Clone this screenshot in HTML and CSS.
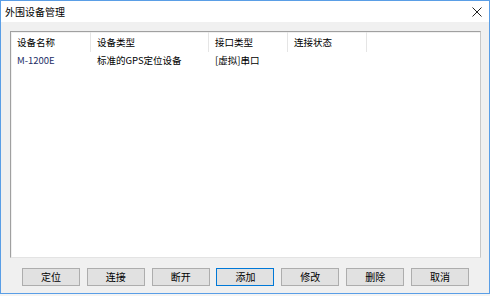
FILE: index.html
```html
<!DOCTYPE html>
<html lang="zh-CN">
<head>
  <meta charset="UTF-8">
  <title>外围设备管理</title>
  <link rel="stylesheet" href="styles.css">
</head>
<body>
  <div class="window">
    <div class="titlebar">
      <span class="title">外围设备管理</span>
      <span class="close">
        <svg width="10" height="10" viewBox="0 0 10 10">
          <path d="M0.5 0.5 L9.5 9.5 M9.5 0.5 L0.5 9.5" stroke="#222" stroke-width="1" fill="none"/>
        </svg>
      </span>
    </div>
    <div class="content">
      <div class="listbox">
        <div class="list-header">
          <div class="col c1">设备名称</div>
          <div class="col c2">设备类型</div>
          <div class="col c3">接口类型</div>
          <div class="col c4">连接状态</div>
        </div>
        <div class="list-row">
          <div class="col c1 name">M-1200E</div>
          <div class="col c2">标准的GPS定位设备</div>
          <div class="col c3">[虚拟]串口</div>
          <div class="col c4"></div>
        </div>
      </div>
      <div class="buttons">
        <button class="btn">定位</button>
        <button class="btn">连接</button>
        <button class="btn">断开</button>
        <button class="btn focused">添加</button>
        <button class="btn">修改</button>
        <button class="btn">删除</button>
        <button class="btn">取消</button>
      </div>
    </div>
  </div>
</body>
</html>
```

FILE: styles.css
```css
body {
  margin: 0;
  background-color: #f4f4f4;
  font-family: "Noto Sans CJK SC", "Noto Sans", sans-serif;
  font-size: 9.5px;
  color: #000;
}
.window {
  width: 490px;
  height: 294px;
  box-sizing: border-box;
  border: 1px solid #5a9ee6;
  display: flex;
  flex-direction: column;
  background-color: #f0f0f0;
}
.titlebar {
  height: 21px;
  background-color: #fff;
  display: flex;
  align-items: center;
  justify-content: space-between;
  padding: 0 7px 0 4px;
}
.title {
  font-size: 10px;
  line-height: 14px;
}
.close {
  display: flex;
  align-items: center;
}
.content {
  flex: 1;
  padding: 9px 0 0 9px;
  display: flex;
  flex-direction: column;
}
.listbox {
  width: 471px;
  height: 227px;
  box-sizing: border-box;
  background-color: #fff;
  border-top: 1px solid #a0a0a0;
  border-left: 1px solid #a0a0a0;
  border-right: 1px solid #c8c8c8;
  border-bottom: 1px solid #e3e3e3;
  box-shadow: inset 1px 1px 0 #f0f0f0;
}
.list-header, .list-row {
  display: flex;
}
.list-header {
  height: 20px;
  align-items: center;
}
.list-header .col {
  height: 20px;
  line-height: 20px;
  border-right: 1px solid #e5e5e5;
}
.list-row {
  height: 17px;
  line-height: 17px;
}
.col {
  box-sizing: border-box;
  padding-left: 6px;
  white-space: nowrap;
}
.c1 { width: 80px; }
.c2 { width: 118px; }
.c3 { width: 79px; }
.c4 { width: 79px; }
.name {
  color: #1d2e66;
}
.buttons {
  margin: 10px 0 0 12px;
  width: 447px;
  display: flex;
  justify-content: space-between;
}
.btn {
  width: 58px;
  height: 18px;
  padding: 0;
  box-sizing: border-box;
  background-color: #e1e1e1;
  border: 1px solid #adadad;
  font-family: "Noto Sans CJK SC", "Noto Sans", sans-serif;
  font-size: 10px;
  line-height: 16px;
  color: #000;
}
.btn.focused {
  border-color: #0078d7;
}
```
